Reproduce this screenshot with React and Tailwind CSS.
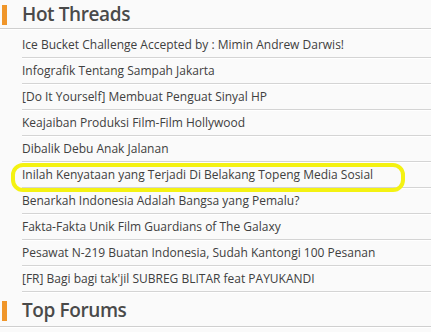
import React from "react";

const threads = [
  "Ice Bucket Challenge Accepted by : Mimin Andrew Darwis!",
  "Infografik Tentang Sampah Jakarta",
  "[Do It Yourself] Membuat Penguat Sinyal HP",
  "Keajaiban Produksi Film-Film Hollywood",
  "Dibalik Debu Anak Jalanan",
  "Inilah Kenyataan yang Terjadi Di Belakang Topeng Media Sosial",
  "Benarkah Indonesia Adalah Bangsa yang Pemalu?",
  "Fakta-Fakta Unik Film Guardians of The Galaxy",
  "Pesawat N-219 Buatan Indonesia, Sudah Kantongi 100 Pesanan",
  "[FR] Bagi bagi tak'jil SUBREG BLITAR feat PAYUKANDI",
];

const SectionTitle = ({ title, className }) => (
  <div className={`flex items-center border-b border-[#cfcfcf] shadow-[0_1px_0_#ffffff] ${className}`}>
    <span className="ml-[2px] w-[5px] h-[20px] bg-[#f0962a]" />
    <h2 className="ml-[15px] text-[19px] font-semibold tracking-[-0.4px] text-[#4a4a4a] leading-none">{title}</h2>
  </div>
);

const App = () => {
  return (
    <div
      className="relative w-[431px] h-[332px] overflow-hidden bg-[#fafafa]"
      style={{ fontFamily: '"Open Sans", "Noto Sans", sans-serif' }}
    >
      <SectionTitle title="Hot Threads" className="h-[29px] pt-[1px]" />
      <ul className="ml-[22px] pt-[3px]">
        {threads.map((t) => (
          <li
            key={t}
            className="h-[26px] flex items-center border-b border-[#d4d4d4] shadow-[0_1px_0_#ffffff] text-[12px] text-[#404040]"
          >
            {t}
          </li>
        ))}
      </ul>
      <SectionTitle title="Top Forums" className="h-[35px] pt-[3px]" />
      {/* yellow marker round the highlighted thread */}
      <div className="absolute left-[11px] top-[163px] w-[394px] h-[29px] border-4 border-[#f4f212] rounded-[12px]" />
    </div>
  );
};

export default App;
